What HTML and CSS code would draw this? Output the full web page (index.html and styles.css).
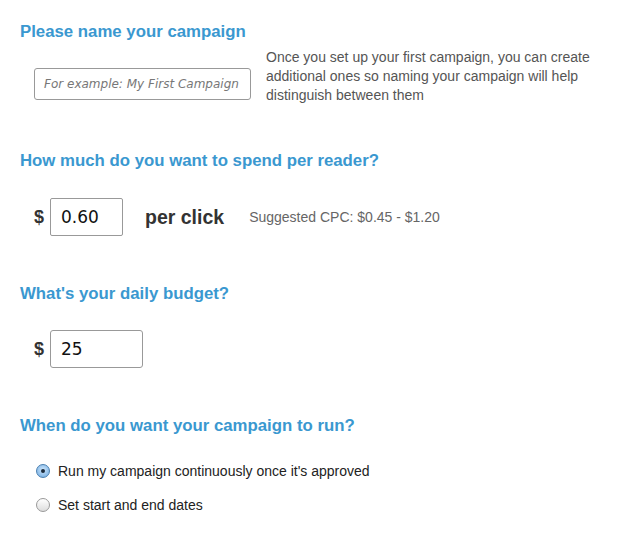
FILE: index.html
```html
<!DOCTYPE html>
<html>
<head>
<meta charset="utf-8">
<link rel="stylesheet" href="styles.css">
</head>
<body>
<div class="page">
  <section class="sec sec-name">
    <h2 class="heading">Please name your campaign</h2>
    <div class="name-row">
      <div class="name-input"><span class="placeholder">For example: My First Campaign</span></div>
      <p class="hint">Once you set up your first campaign, you can create additional ones so naming your campaign will help distinguish between them</p>
    </div>
  </section>
  <section class="sec sec-cpc">
    <h2 class="heading">How much do you want to spend per reader?</h2>
    <div class="money-row">
      <span class="dollar">$</span>
      <div class="box box-cpc">0.60</div>
      <span class="per-click">per click</span>
      <span class="suggest">Suggested CPC: $0.45 - $1.20</span>
    </div>
  </section>
  <section class="sec sec-budget">
    <h2 class="heading">What's your daily budget?</h2>
    <div class="money-row">
      <span class="dollar">$</span>
      <div class="box box-budget">25</div>
    </div>
  </section>
  <section class="sec sec-run">
    <h2 class="heading">When do you want your campaign to run?</h2>
    <div class="radios">
      <div class="radio-row"><span class="radio checked"></span><span class="radio-label">Run my campaign continuously once it's approved</span></div>
      <div class="radio-row"><span class="radio"></span><span class="radio-label">Set start and end dates</span></div>
    </div>
  </section>
</div>
</body>
</html>
```
FILE: styles.css
```css
html, body { margin: 0; padding: 0; background: #fff; }
body { font-family: "Liberation Sans", Arial, sans-serif; color: #333; }
.page { padding: 22px 20px 0 20px; }
.heading {
  margin: 0;
  font-size: 16.8px;
  line-height: 20px;
  font-weight: bold;
  color: #3a98d0;
}
.sec-name .heading { margin-bottom: 5px; }
.name-row { display: flex; align-items: flex-start; padding-left: 14px; }
.name-input {
  margin-top: 21px;
  width: 215px;
  height: 30px;
  border: 1px solid #999;
  border-radius: 3px;
  box-sizing: content-box;
  display: flex;
  align-items: center;
}
.placeholder {
  font-family: "DejaVu Sans", Verdana, sans-serif;
  font-style: italic;
  font-size: 12px;
  color: #777;
  padding-left: 9px;
  white-space: nowrap;
}
.hint {
  margin: 1px 0 0 15px;
  width: 340px;
  font-size: 14px;
  line-height: 19px;
  color: #555;
}
.sec-cpc { margin-top: 46px; }
.money-row { display: flex; align-items: center; padding-left: 14px; }
.sec-cpc .money-row { margin-top: 27px; }
.dollar { font-weight: bold; font-size: 18px; color: #333; width: 16px; }
.box {
  height: 36px;
  border: 1px solid #999;
  border-radius: 2px;
  display: flex;
  align-items: center;
  padding-left: 10px;
  font-family: "DejaVu Sans", Verdana, sans-serif;
  font-size: 17px;
  color: #111;
}
.box-cpc { width: 61px; }
.box-budget { width: 81px; border-radius: 3px; }
.per-click { margin-left: 22px; font-weight: bold; font-size: 19.5px; color: #333; }
.suggest { margin-left: 25px; font-size: 14px; color: #666; }
.sec-budget { margin-top: 48px; }
.sec-budget .money-row { margin-top: 26px; }
.sec-run { margin-top: 48px; }
.radios { margin-top: 26px; padding-left: 16px; }
.radio-row { display: flex; align-items: center; height: 18px; margin-bottom: 16px; }
.radio {
  width: 12px; height: 12px;
  border-radius: 50%;
  border: 1px solid #999;
  background: linear-gradient(#fff, #ddd);
  box-sizing: content-box;
  position: relative;
  flex: none;
}
.radio.checked {
  border-color: #4a7fb0;
  background: radial-gradient(circle at 50% 40%, #cfe6fb, #6aa8e0);
}
.radio.checked::after {
  content: "";
  position: absolute;
  left: 4px; top: 4px;
  width: 4px; height: 4px;
  border-radius: 50%;
  background: #1b2b3c;
}
.radio-label { margin-left: 8px; font-size: 14px; color: #222; }
```
